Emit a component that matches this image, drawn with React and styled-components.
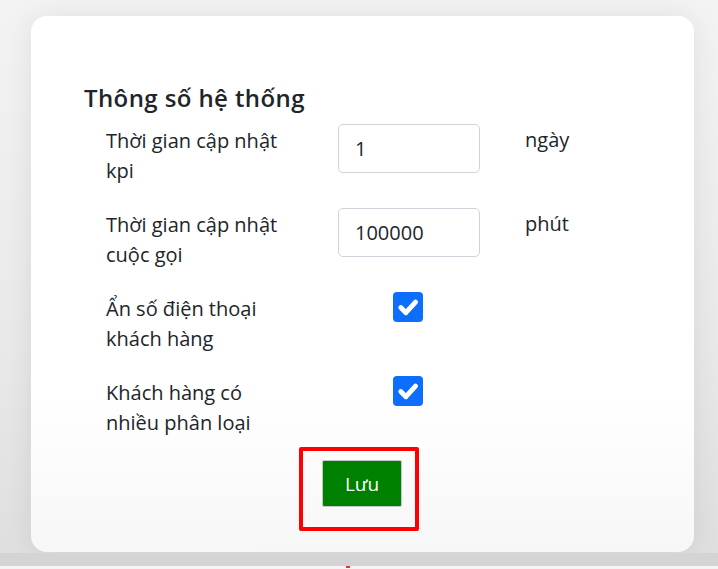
import styled, { createGlobalStyle } from "styled-components";

const GlobalStyle = createGlobalStyle`
  html, body {
    margin: 0;
    height: 100%;
  }
  body {
    background: linear-gradient(180deg, #f3f3f3 0%, #e9e9e9 60%, #dedede 100%);
    font-family: "Open Sans", "Noto Sans", sans-serif;
    color: #212529;
    overflow: hidden;
  }
`;

const settings = [
  { label: ["Thời gian cập nhật", "kpi"], type: "number", value: "1", unit: "ngày" },
  { label: ["Thời gian cập nhật", "cuộc gọi"], type: "number", value: "100000", unit: "phút" },
  { label: ["Ẩn số điện thoại", "khách hàng"], type: "check", value: true },
  { label: ["Khách hàng có", "nhiều phân loại"], type: "check", value: true },
];

const App = () => {
  return (
    <>
      <GlobalStyle />
      <Page>
        <Card>
          <Title>Thông số hệ thống</Title>
          <Form>
            {settings.map((s, i) => (
              <Row key={i}>
                <Label>
                  {s.label[0]}
                  <br />
                  {s.label[1]}
                </Label>
                {s.type === "number" ? (
                  <Input defaultValue={s.value} />
                ) : (
                  <CheckCell>
                    <Check>
                      <svg width="30" height="30" viewBox="0 0 20 20">
                        <path
                          d="M5.2 10.4l3.4 3.4l6.4-7"
                          fill="none"
                          stroke="#fff"
                          strokeWidth="3.3"
                          strokeLinecap="round"
                          strokeLinejoin="round"
                        />
                      </svg>
                    </Check>
                  </CheckCell>
                )}
                {s.unit && <Unit>{s.unit}</Unit>}
              </Row>
            ))}
          </Form>
          <ButtonRow>
            <Highlight>
              <SaveButton>Lưu</SaveButton>
            </Highlight>
          </ButtonRow>
        </Card>
      </Page>
      <Band />
      <Foot>
        <Mark />
      </Foot>
    </>
  );
};

export default App;

const Page = styled.div`
  padding: 16px 24px 0 31px;
`;

const Card = styled.div`
  height: 536px;
  box-sizing: border-box;
  padding: 67px 0 21px;
  border-radius: 16px;
  background: linear-gradient(180deg, #ffffff 0%, #ffffff 70%, #f7f7f7 100%);
  box-shadow: 0 0 28px rgba(0, 0, 0, 0.08);
  display: flex;
  flex-direction: column;
`;

const Title = styled.h4`
  margin: 0;
  padding-left: 53px;
  font-size: 24px;
  font-weight: 600;
  letter-spacing: 0.4px;
  line-height: 29px;
`;

const Form = styled.div`
  padding-left: 75px;
  margin-top: 13px;
  display: flex;
  flex-direction: column;
  gap: 24px;
`;

const Row = styled.div`
  display: grid;
  grid-template-columns: 232px 142px auto;
  align-items: start;
  height: 60px;
`;

const Label = styled.div`
  font-size: 20px;
  line-height: 30px;
  margin-top: 1px;
`;

const Input = styled.input`
  box-sizing: border-box;
  width: 142px;
  height: 49px;
  margin-top: -1px;
  padding: 0 16px;
  border: 1px solid #ced4da;
  border-radius: 5px;
  font-family: inherit;
  font-size: 20px;
  color: #212529;
  background: #fff;
  outline: none;
`;

const Unit = styled.div`
  margin-left: 45px;
  font-size: 20px;
  line-height: 30px;
`;

const CheckCell = styled.div`
  display: flex;
  justify-content: center;
  margin-top: -1px;
`;

const Check = styled.span`
  width: 30px;
  height: 30px;
  border-radius: 4px;
  background: #0d6efd;
  display: flex;
  margin-left: -2px;
`;

const ButtonRow = styled.div`
  margin-top: 10px;
  display: flex;
  justify-content: center;
  padding-right: 7px;
`;

const Highlight = styled.div`
  border: 4px solid #ff0000;
  border-radius: 2px;
  padding: 9px 13px 20px 19px;
`;

const SaveButton = styled.button`
  width: 80px;
  height: 47px;
  border: 1px solid #c8c8c8;
  border-radius: 2px;
  background: #008000;
  color: #fff;
  font-family: inherit;
  font-size: 19px;
  cursor: pointer;
`;

const Band = styled.div`
  margin-top: 1px;
  height: 13px;
  background: #d4d4d4;
`;

const Foot = styled.div`
  height: 3px;
  background: #f4f4f6;
  position: relative;
`;

const Mark = styled.span`
  position: absolute;
  left: 346px;
  top: 0;
  width: 4px;
  height: 2px;
  background: #ff2a2a;
`;
